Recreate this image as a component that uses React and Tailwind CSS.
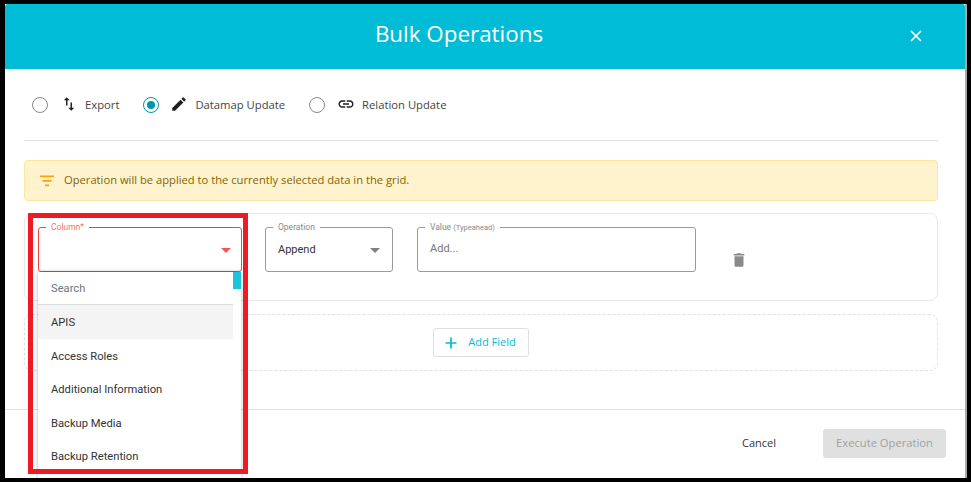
import React from "react";

const open = "font-['Open_Sans',sans-serif]";
const roboto = "font-['Roboto',sans-serif]";

function Radio({ checked }) {
  return (
    <span className={`w-4 h-4 rounded-full border flex items-center justify-center shrink-0 ${checked ? "border-[#0097a7]" : "border-[#8a8a8a]"}`}>
      {checked && <span className="w-2 h-2 rounded-full bg-[#0097a7]" />}
    </span>
  );
}

function SwapIcon() {
  return (
    <svg width="18" height="18" viewBox="0 0 24 24" fill="#212121">
      <path d="M16 17.01V10h-2v7.01h-3L15 21l4-3.99h-3zM9 3 5 6.99h3V14h2V6.99h3L9 3z" />
    </svg>
  );
}
function PencilIcon() {
  return (
    <svg width="18" height="18" viewBox="0 0 24 24" fill="#212121">
      <path d="M3 17.25V21h3.75L17.81 9.94l-3.75-3.75L3 17.25zM20.71 7.04a1 1 0 0 0 0-1.41l-2.34-2.34a1 1 0 0 0-1.41 0l-1.83 1.83 3.75 3.75 1.83-1.83z" />
    </svg>
  );
}
function LinkIcon() {
  return (
    <svg width="18" height="18" viewBox="0 0 24 24" fill="#212121">
      <path d="M3.9 12c0-1.71 1.39-3.1 3.1-3.1h4V7H7c-2.76 0-5 2.24-5 5s2.24 5 5 5h4v-1.9H7c-1.71 0-3.1-1.39-3.1-3.1zM8 13h8v-2H8v2zm9-6h-4v1.9h4c1.71 0 3.1 1.39 3.1 3.1s-1.39 3.1-3.1 3.1h-4V17h4c2.76 0 5-2.24 5-5s-2.24-5-5-5z" />
    </svg>
  );
}

function Outlined({ label, labelClass, borderClass, widthClass, children }) {
  return (
    <fieldset className={`${widthClass} h-[49px] border rounded-[3px] px-[7px] ${borderClass}`}>
      <legend className={`px-[5px] text-[8.5px] leading-[9px] ${roboto} ${labelClass}`}>{label}</legend>
      {children}
    </fieldset>
  );
}

function Caret({ color }) {
  return <span className={`w-0 h-0 border-x-[5px] border-x-transparent border-t-[5px] ${color}`} />;
}

const options = ["Access Roles", "Additional Information", "Backup Media", "Backup Retention"];

export default function App() {
  return (
    <div className="w-[971px] h-[482px] bg-black pl-[5px] pt-[4px] pr-[4px] pb-[4px] overflow-hidden">
      <div className={`relative w-[962px] h-[474px] bg-white border-r-2 border-r-[#a8a8a8] flex flex-col overflow-hidden ${open}`}>
        <header className="h-[65px] shrink-0 bg-[#00bcd6] rounded-t-[3px] flex items-center relative">
          <h1 className="w-[908px] text-center text-white text-[22.4px] leading-[30px] mb-[5px]">Bulk Operations</h1>
          <svg width="12" height="12" viewBox="0 0 12 12" className="ml-[-3px] mt-[-1px]" stroke="white" strokeWidth="1.6">
            <path d="M1 1l10 10M11 1 1 11" />
          </svg>
        </header>

        <div className="flex-1 flex flex-col pl-[19px] pr-[27px]">
          <div className="h-[72px] shrink-0 border-b border-[#e0e0e0] pt-[1px] flex items-center text-[11.25px] text-[#444]">
            <div className="flex items-center ml-[8px]">
              <Radio />
              <span className="ml-[12px] flex -mt-[2px]"><SwapIcon /></span>
              <span className="ml-[7px]">Export</span>
            </div>
            <div className="flex items-center ml-[24px]">
              <Radio checked />
              <span className="ml-[11px] flex -mt-[2px]"><PencilIcon /></span>
              <span className="ml-[7px]">Datamap Update</span>
            </div>
            <div className="flex items-center ml-[24px]">
              <Radio />
              <span className="ml-[12px] flex -mt-[2px]"><LinkIcon /></span>
              <span className="ml-[7px]">Relation Update</span>
            </div>
          </div>

          <div className="mt-[19px] h-[41px] shrink-0 bg-[#fff3cd] border border-[#ffe69c] rounded-[4px] flex items-center pl-[14px]">
            <svg width="16" height="14" viewBox="0 0 16 14" fill="#ff9f0a">
              <rect x="1" y="1.5" width="14" height="1.7" />
              <rect x="3.5" y="6" width="9" height="1.7" />
              <rect x="6" y="10.5" width="4" height="1.7" />
            </svg>
            <span className="ml-[9px] text-[11.2px] text-[#856404]">Operation will be applied to the currently selected data in the grid.</span>
          </div>

          <div className="mt-[12px] h-[88px] shrink-0 border border-[#e8e8e8] rounded-[8px] pl-[13px] pt-[9px] flex items-start">
            <Outlined label="Column*" labelClass="text-[#f8716a]" borderClass="border-[#f44336]" widthClass="w-[204px]">
              <div className="h-[37px] flex items-center justify-end pr-[3px]"><Caret color="border-t-[#f4574c]" /></div>
            </Outlined>
            <Outlined label="Operation" labelClass="text-[#8a8a8a]" borderClass="border-[#9a9a9a] ml-[23px]" widthClass="w-[128px]">
              <div className={`h-[37px] flex items-center justify-between pl-[5px] pr-[5px] text-[11px] text-[#333] ${roboto}`}>
                <span>Append</span>
                <Caret color="border-t-[#808080]" />
              </div>
            </Outlined>
            <Outlined
              label={<>Value <span className="text-[7.5px]">(Typeahead)</span></>}
              labelClass="text-[#8a8a8a]"
              borderClass="border-[#9a9a9a] ml-[24px]"
              widthClass="w-[279px]"
            >
              <div className={`h-[34px] flex items-center pl-[5px] text-[11px] text-[#757575] ${roboto}`}>Add...</div>
            </Outlined>
            <svg width="18" height="18" viewBox="0 0 24 24" fill="#8a8a8a" className="ml-[34px] mt-[28px]">
              <path d="M6 19c0 1.1.9 2 2 2h8c1.1 0 2-.9 2-2V7H6v12zM19 4h-3.5l-1-1h-5l-1 1H5v2h14V4z" />
            </svg>
          </div>

          <div className="mt-[13px] h-[57px] shrink-0 border border-dashed border-[#e0e0e0] rounded-[8px] flex items-center justify-center">
            <button className="w-[96px] h-[29px] border border-[#dedede] rounded-[3px] flex items-center justify-center text-[#00bcd6] text-[11px] -ml-[1px]">
              <svg width="12" height="12" viewBox="0 0 12 12" stroke="#00bcd6" strokeWidth="1.7" className="mr-[11px]">
                <path d="M6 .5v11M.5 6h11" />
              </svg>
              Add Field
            </button>
          </div>
        </div>

        <footer className="h-[69px] shrink-0 border-t border-[#e0e0e0] flex items-center justify-end pr-[19px] pb-[2px] text-[11px]">
          <span className="text-[#333] mr-[47px]">Cancel</span>
          <button className="w-[123px] h-[29px] rounded-[3px] bg-[#e0e0e0] text-[#a0a0a0] text-[11.2px]">Execute Operation</button>
        </footer>

        <div className={`absolute left-[33px] top-[268px] w-[203px] h-[206px] bg-white shadow-[0_0_4px_rgba(0,0,0,0.3)] text-[11.2px] text-[#333] ${roboto}`}>
          <div className="w-[195px] h-[33px] border-b border-[#dcdcdc] pt-[3px] flex items-center pl-[13px] text-[#70757f]">Search</div>
          <div className="w-[195px] h-[34px] bg-[#f4f4f4] pt-[3px] flex items-center pl-[13px]">APIS</div>
          {options.map((o) => (
            <div key={o} className="h-[33.5px] pt-[3px] flex items-center pl-[13px]">{o}</div>
          ))}
          <div className="absolute right-0 top-0 w-[8px] h-[17px] bg-[#1cc4da]" />
        </div>

        <div className="absolute left-[23px] top-[209px] w-[220px] h-[261px] border-[5px] border-[#ed1c24]" />
      </div>
    </div>
  );
}
